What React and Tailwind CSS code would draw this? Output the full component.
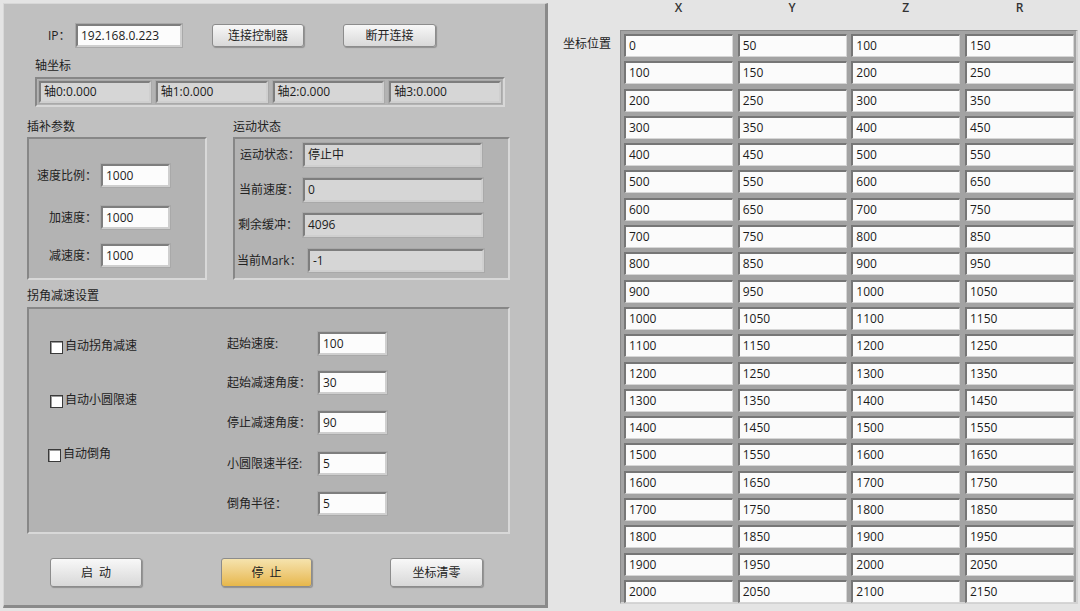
import React from "react";

const frame =
  "box-border border-2 border-t-[#878787] border-l-[#878787] border-b-[#d8d8d8] border-r-[#d8d8d8] bg-[#b3b3b3]";

function Field({ className = "", value, dim }) {
  return (
    <div
      className={`box-border flex items-center pl-[3px] text-[12px] text-[#1c1c1c] whitespace-nowrap border-t-2 border-l-2 border-t-[#7e7e7e] border-l-[#7e7e7e] border-b-2 border-r-2 border-b-[#cfcfcf] border-r-[#cfcfcf] shadow-[0_0_0_1px_#a9a9a9] ${
        dim ? "bg-[#d6d6d6]" : "bg-[#fcfcfc]"
      } ${className}`}
    >
      {value}
    </div>
  );
}

function Btn({ className = "", children, yellow }) {
  return (
    <div
      className={`box-border flex items-center justify-center rounded-[3px] border border-[#8c8c8c] text-[12px] text-[#222] shadow-[1px_1px_1px_rgba(0,0,0,0.25)] ${
        yellow
          ? "bg-linear-to-b from-[#f5e3ad] to-[#e7b749]"
          : "bg-linear-to-b from-[#f8f8f8] to-[#d8d8d8]"
      } ${className}`}
    >
      {children}
    </div>
  );
}

function Check({ className = "", label }) {
  return (
    <div className={`flex items-center h-[13px] ${className}`}>
      <div className="box-border w-[13px] h-[13px] bg-white border border-[#3a3a3a] shadow-[inset_1px_1px_0_#9a9a9a]" />
      <span className="ml-[2px] mb-[4px] text-[12px] text-[#222] whitespace-nowrap">{label}</span>
    </div>
  );
}

const rows = Array.from({ length: 21 }, (_, i) => [
  i * 100,
  i * 100 + 50,
  i * 100 + 100,
  i * 100 + 150,
]);

export default function App() {
  return (
    <div className="w-[1080px] h-[611px] overflow-hidden bg-[#e4e4e4] flex font-['Open_Sans','Noto_Sans_CJK_SC',sans-serif] text-[#222]">
      {/* Left panel */}
      <div className="ml-[3px] mt-[3px] w-[545px] h-[605px] shrink-0 box-border border-l border-t border-l-[#d8d8d8] border-t-[#d8d8d8] border-r-[3px] border-b-[3px] border-r-[#8a8a8a] border-b-[#8a8a8a] bg-[#c0c0c0] flex flex-col">
        {/* IP row */}
        <div className="mt-[20px] flex items-center h-[23px]">
          <span className="ml-[44px] w-[28px] text-[12px] whitespace-nowrap">IP：</span>
          <Field className="w-[106px] h-[23px]" value="192.168.0.223" />
          <Btn className="ml-[30px] w-[92px] h-[23px]">连接控制器</Btn>
          <Btn className="ml-[39px] w-[93px] h-[23px]">断开连接</Btn>
        </div>

        {/* 轴坐标 */}
        <div className="mt-[11px] ml-[31px] h-[16px] leading-[16px] text-[12px]">轴坐标</div>
        <div className={`mt-[3px] ml-[31px] w-[470px] h-[30px] p-[2px] grid grid-cols-4 gap-[5px] ${frame} bg-[#aaaaaa]`}>
          <Field dim value="轴0:0.000" />
          <Field dim value="轴1:0.000" />
          <Field dim value="轴2:0.000" />
          <Field dim value="轴3:0.000" />
        </div>

        {/* groups row */}
        <div className="mt-[12px] ml-[23px] flex">
          <div className="w-[180px] flex flex-col">
            <div className="h-[16px] leading-[16px] text-[12px]">插补参数</div>
            <div className={`mt-[2px] h-[143px] ${frame} flex flex-col pt-[25px]`}>
              <div className="flex items-center h-[23px]">
                <span className="w-[68px] text-right text-[12px] whitespace-nowrap">速度比例：</span>
                <Field className="ml-[4px] w-[69px] h-[23px]" value="1000" />
              </div>
              <div className="mt-[19px] flex items-center h-[23px]">
                <span className="w-[68px] text-right text-[12px] whitespace-nowrap">加速度：</span>
                <Field className="ml-[4px] w-[69px] h-[23px]" value="1000" />
              </div>
              <div className="mt-[15px] flex items-center h-[23px]">
                <span className="w-[68px] text-right text-[12px] whitespace-nowrap">减速度：</span>
                <Field className="ml-[4px] w-[69px] h-[23px]" value="1000" />
              </div>
            </div>
          </div>

          <div className="ml-[26px] w-[277px] flex flex-col">
            <div className="h-[16px] leading-[16px] text-[12px]">运动状态</div>
            <div className={`mt-[2px] h-[143px] ${frame} flex flex-col pt-[4px]`}>
              <div className="flex items-center h-[24px]">
                <span className="ml-[5px] w-[63px] text-[12px] whitespace-nowrap">运动状态：</span>
                <Field dim className="w-[179px] h-[24px]" value="停止中" />
              </div>
              <div className="mt-[11px] flex items-center h-[24px]">
                <span className="ml-[4px] w-[64px] text-[12px] whitespace-nowrap">当前速度：</span>
                <Field dim className="w-[180px] h-[24px]" value="0" />
              </div>
              <div className="mt-[11px] flex items-center h-[24px]">
                <span className="ml-[3px] w-[65px] text-[12px] whitespace-nowrap">剩余缓冲：</span>
                <Field dim className="w-[180px] h-[24px]" value="4096" />
              </div>
              <div className="mt-[12px] flex items-center h-[23px]">
                <span className="ml-[2px] w-[71px] text-[12px] whitespace-nowrap">当前Mark：</span>
                <Field dim className="w-[176px] h-[23px]" value="-1" />
              </div>
            </div>
          </div>
        </div>

        {/* 拐角减速设置 */}
        <div className="mt-[8px] ml-[23px] h-[16px] leading-[16px] text-[12px]">拐角减速设置</div>
        <div className={`mt-[3px] ml-[23px] w-[483px] h-[227px] ${frame} flex`}>
          <div className="w-[198px] flex flex-col pt-[32px]">
            <Check className="ml-[21px]" label="自动拐角减速" />
            <Check className="ml-[21px] mt-[41px]" label="自动小圆限速" />
            <Check className="ml-[19px] mt-[41px]" label="自动倒角" />
          </div>
          <div className="flex flex-col pt-[23px]">
            <div className="flex items-center h-[23px]">
              <span className="w-[91px] text-[12px] whitespace-nowrap">起始速度:</span>
              <Field className="w-[69px] h-[23px]" value="100" />
            </div>
            <div className="mt-[16px] flex items-center h-[23px]">
              <span className="w-[91px] text-[12px] whitespace-nowrap">起始减速角度：</span>
              <Field className="w-[69px] h-[23px]" value="30" />
            </div>
            <div className="mt-[17px] flex items-center h-[23px]">
              <span className="w-[91px] text-[12px] whitespace-nowrap">停止减速角度：</span>
              <Field className="w-[69px] h-[23px]" value="90" />
            </div>
            <div className="mt-[18px] flex items-center h-[23px]">
              <span className="w-[91px] text-[12px] whitespace-nowrap">小圆限速半径:</span>
              <Field className="w-[69px] h-[23px]" value="5" />
            </div>
            <div className="mt-[17px] flex items-center h-[23px]">
              <span className="w-[91px] text-[12px] whitespace-nowrap">倒角半径：</span>
              <Field className="w-[69px] h-[23px]" value="5" />
            </div>
          </div>
        </div>

        {/* bottom buttons */}
        <div className="mt-[24px] flex">
          <Btn className="ml-[46px] w-[92px] h-[29px]">启&nbsp;&nbsp;动</Btn>
          <Btn yellow className="ml-[79px] w-[91px] h-[29px]">停&nbsp;&nbsp;止</Btn>
          <Btn className="ml-[78px] w-[93px] h-[29px]">坐标清零</Btn>
        </div>
      </div>

      {/* Right side */}
      <div className="flex flex-col">
        <div className="ml-[76px] h-[16px] grid grid-cols-[109px_109px_109px_109px] gap-x-[4.67px] text-[12px] font-semibold text-[#333] leading-[16px]">
          <div className="text-center">X</div>
          <div className="text-center">Y</div>
          <div className="text-center">Z</div>
          <div className="text-center">R</div>
        </div>
        <div className="mt-[14px] flex">
          <div className="box-border w-[72px] shrink-0 pl-[15px] pt-[6px] leading-[16px] text-[12px] whitespace-nowrap">
            坐标位置
          </div>
          <div className="box-border shrink-0 w-[458px] h-[574px] bg-[#a3a3a3] border-t border-l border-t-[#8a8a8a] border-l-[#8a8a8a] border-b-2 border-r-2 border-b-[#d2d2d2] border-r-[#d2d2d2] pl-[3px] pt-[3px]">
            <div className="grid grid-cols-[109px_109px_109px_109px] auto-rows-[23px] gap-x-[4.67px] gap-y-[4.3px]">
              {rows.map((r, i) =>
                r.map((v, j) => (
                  <div
                    key={`${i}-${j}`}
                    className="box-border flex items-center pl-[3px] text-[12px] text-[#1c1c1c] bg-[#fbfbfb] border-t-2 border-l-2 border-t-[#767676] border-l-[#767676] border-b border-r border-b-[#d6d6d6] border-r-[#d6d6d6]"
                  >
                    {v}
                  </div>
                ))
              )}
            </div>
          </div>
        </div>
      </div>
    </div>
  );
}
